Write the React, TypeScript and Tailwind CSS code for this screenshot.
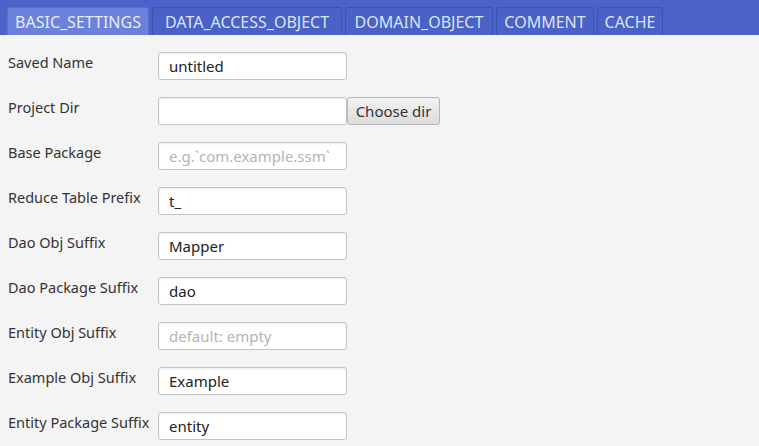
import { useState } from 'react';

const TABS = [
  { name: 'BASIC_SETTINGS', w: 'w-[142px]' },
  { name: 'DATA_ACCESS_OBJECT', w: 'w-[190px]' },
  { name: 'DOMAIN_OBJECT', w: 'w-[148px]' },
  { name: 'COMMENT', w: 'w-[98px]' },
  { name: 'CACHE', w: 'w-[66px]' },
];

const FIELDS: { label: string; value?: string; placeholder?: string; dir?: boolean }[] = [
  { label: 'Saved Name', value: 'untitled' },
  { label: 'Project Dir', value: '', dir: true },
  { label: 'Base Package', placeholder: 'e.g.`com.example.ssm`' },
  { label: 'Reduce Table Prefix', value: 't_' },
  { label: 'Dao Obj Suffix', value: 'Mapper' },
  { label: 'Dao Package Suffix', value: 'dao' },
  { label: 'Entity Obj Suffix', placeholder: 'default: empty' },
  { label: 'Example Obj Suffix', value: 'Example' },
  { label: 'Entity Package Suffix', value: 'entity' },
];

export default function App() {
  const [active, setActive] = useState(0);

  return (
    <div
      className="w-[759px] h-[446px] overflow-hidden bg-[#f4f4f4] text-[#333]"
      style={{ fontFamily: "'Noto Sans', 'Open Sans', sans-serif" }}
    >
      {/* tab header */}
      <div className="h-[35px] bg-[#4b63c9] flex items-end pl-[7px]">
        {TABS.map((t, i) => (
          <button
            key={t.name}
            onClick={() => setActive(i)}
            className={`${t.w} ${i === 0 ? '' : 'ml-[3px]'} ${
              i === active
                ? 'h-[28px] rounded-t-[3px] border border-b-0 border-[#5a70cf] bg-[#6b81da] text-[#e8ecfa] text-[16px] leading-none'
                : 'h-[28px] rounded-t-[3px] border border-b-0 border-[#3c52b3] bg-[#4a61c6] text-[#dde3f7] text-[16px] leading-none'
            }`}
          >
            {t.name}
          </button>
        ))}
      </div>

      {/* form */}
      <div className="pt-[17px] pl-[8px] flex flex-col gap-[17px]">
        {FIELDS.map((f) => (
          <div key={f.label} className="flex items-start h-[28px]">
            <label className="w-[150px] text-[14.5px] leading-none pt-[3px] text-[#333]">{f.label}</label>
            <input
              defaultValue={f.value}
              placeholder={f.placeholder}
              className="w-[189px] h-[28px] px-[10px] bg-white border border-[#c4c4c4] rounded-[3px] text-[15px] text-[#222] placeholder:text-[#b4b4b4] shadow-[inset_0_1px_2px_rgba(0,0,0,0.08)] outline-none"
            />
            {f.dir && (
              <button className="w-[93px] h-[28px] border border-[#b5b5b5] rounded-[3px] bg-gradient-to-b from-[#f2f2f2] to-[#dcdcdc] text-[15px] text-[#333]">
                Choose dir
              </button>
            )}
          </div>
        ))}
      </div>
    </div>
  );
}
